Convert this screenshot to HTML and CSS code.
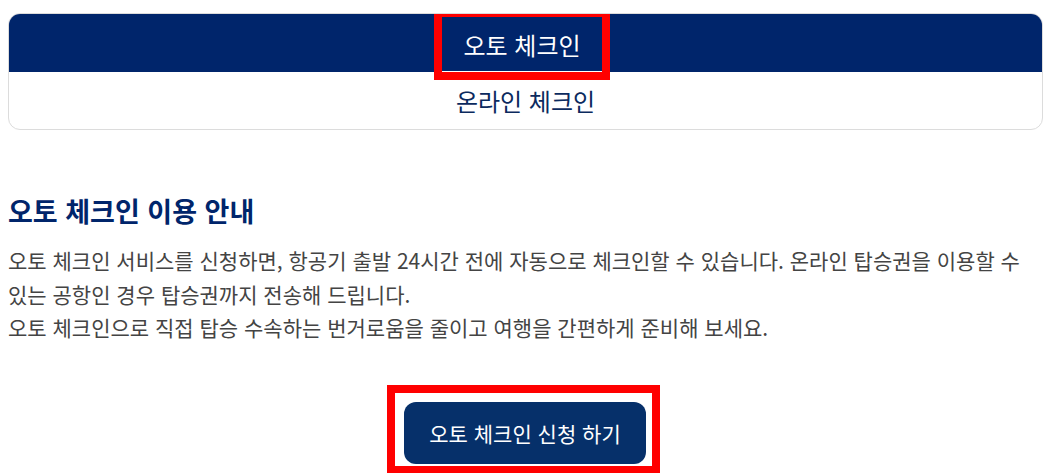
FILE: index.html
```html
<!DOCTYPE html>
<html lang="ko">
<head>
<meta charset="utf-8">
<link rel="stylesheet" href="styles.css">
</head>
<body>
<div class="page">
  <ul class="tabs">
    <li class="tab tab-active"><button class="tab-btn">오토 체크인</button></li>
    <li class="tab"><button class="tab-btn tab-btn-plain">온라인 체크인</button></li>
  </ul>
  <section class="guide">
    <h2 class="guide-title">오토 체크인 이용 안내</h2>
    <p class="guide-text">오토 체크인 서비스를 신청하면, 항공기 출발 24시간 전에 자동으로 체크인할 수 있습니다. 온라인 탑승권을 이용할 수 있는 공항인 경우 탑승권까지 전송해 드립니다.<br>오토 체크인으로 직접 탑승 수속하는 번거로움을 줄이고 여행을 간편하게 준비해 보세요.</p>
  </section>
  <div class="cta">
    <div class="cta-frame"><button class="cta-btn">오토 체크인 신청 하기</button></div>
  </div>
</div>
</body>
</html>
```

FILE: styles.css
```css
* { box-sizing: border-box; }
html, body { margin: 0; padding: 0; background: #fff; }
body {
  font-family: "Noto Sans CJK KR", "Noto Sans", sans-serif;
  color: #444;
}
.page {
  width: 1035px;
  margin-left: 8px;
  padding-top: 13px;
}
.tabs {
  list-style: none;
  margin: 0;
  padding: 0;
  border: 1px solid #dcdcdc;
  border-radius: 12px;
  overflow: hidden;
}
.tab {
  display: flex;
  justify-content: center;
  height: 57px;
}
.tab-active {
  background: #00256b;
  height: 59px;
  padding-top: 4px;
  margin: -1px -1px 0;
}
.tab-btn {
  font-family: inherit;
  font-size: 24px;
  width: 160px;
  height: 55px;
  border: 0;
  background: transparent;
  color: #fff;
  padding: 0;
  margin-right: 7px;
}
.tab-active .tab-btn {
  outline: 8px solid #ff0000;
  border-bottom: 1px solid #fff;
}
.tab-btn-plain {
  color: #0b2a5e;
  height: 56px;
  width: auto;
  margin-right: 0;
}
.guide {
  padding-top: 64px;
}
.guide-title {
  margin: 0;
  font-size: 27px;
  font-weight: 700;
  color: #00256b;
  line-height: 34px;
}
.guide-text {
  margin: 16px 0 0;
  font-size: 21px;
  line-height: 33.5px;
  color: #444;
  word-break: keep-all;
}
.cta {
  display: flex;
  justify-content: center;
  padding-top: 40px;
  padding-right: 4px;
}
.cta-frame {
  border: 8px solid #ff0000;
  padding: 9px 6px 2px 9px;
}
.cta-btn {
  display: block;
  width: 242px;
  height: 62px;
  border: 0;
  border-radius: 12px;
  background: #06306a;
  color: #fff;
  font-family: inherit;
  font-size: 21px;
  padding: 0;
}
```
